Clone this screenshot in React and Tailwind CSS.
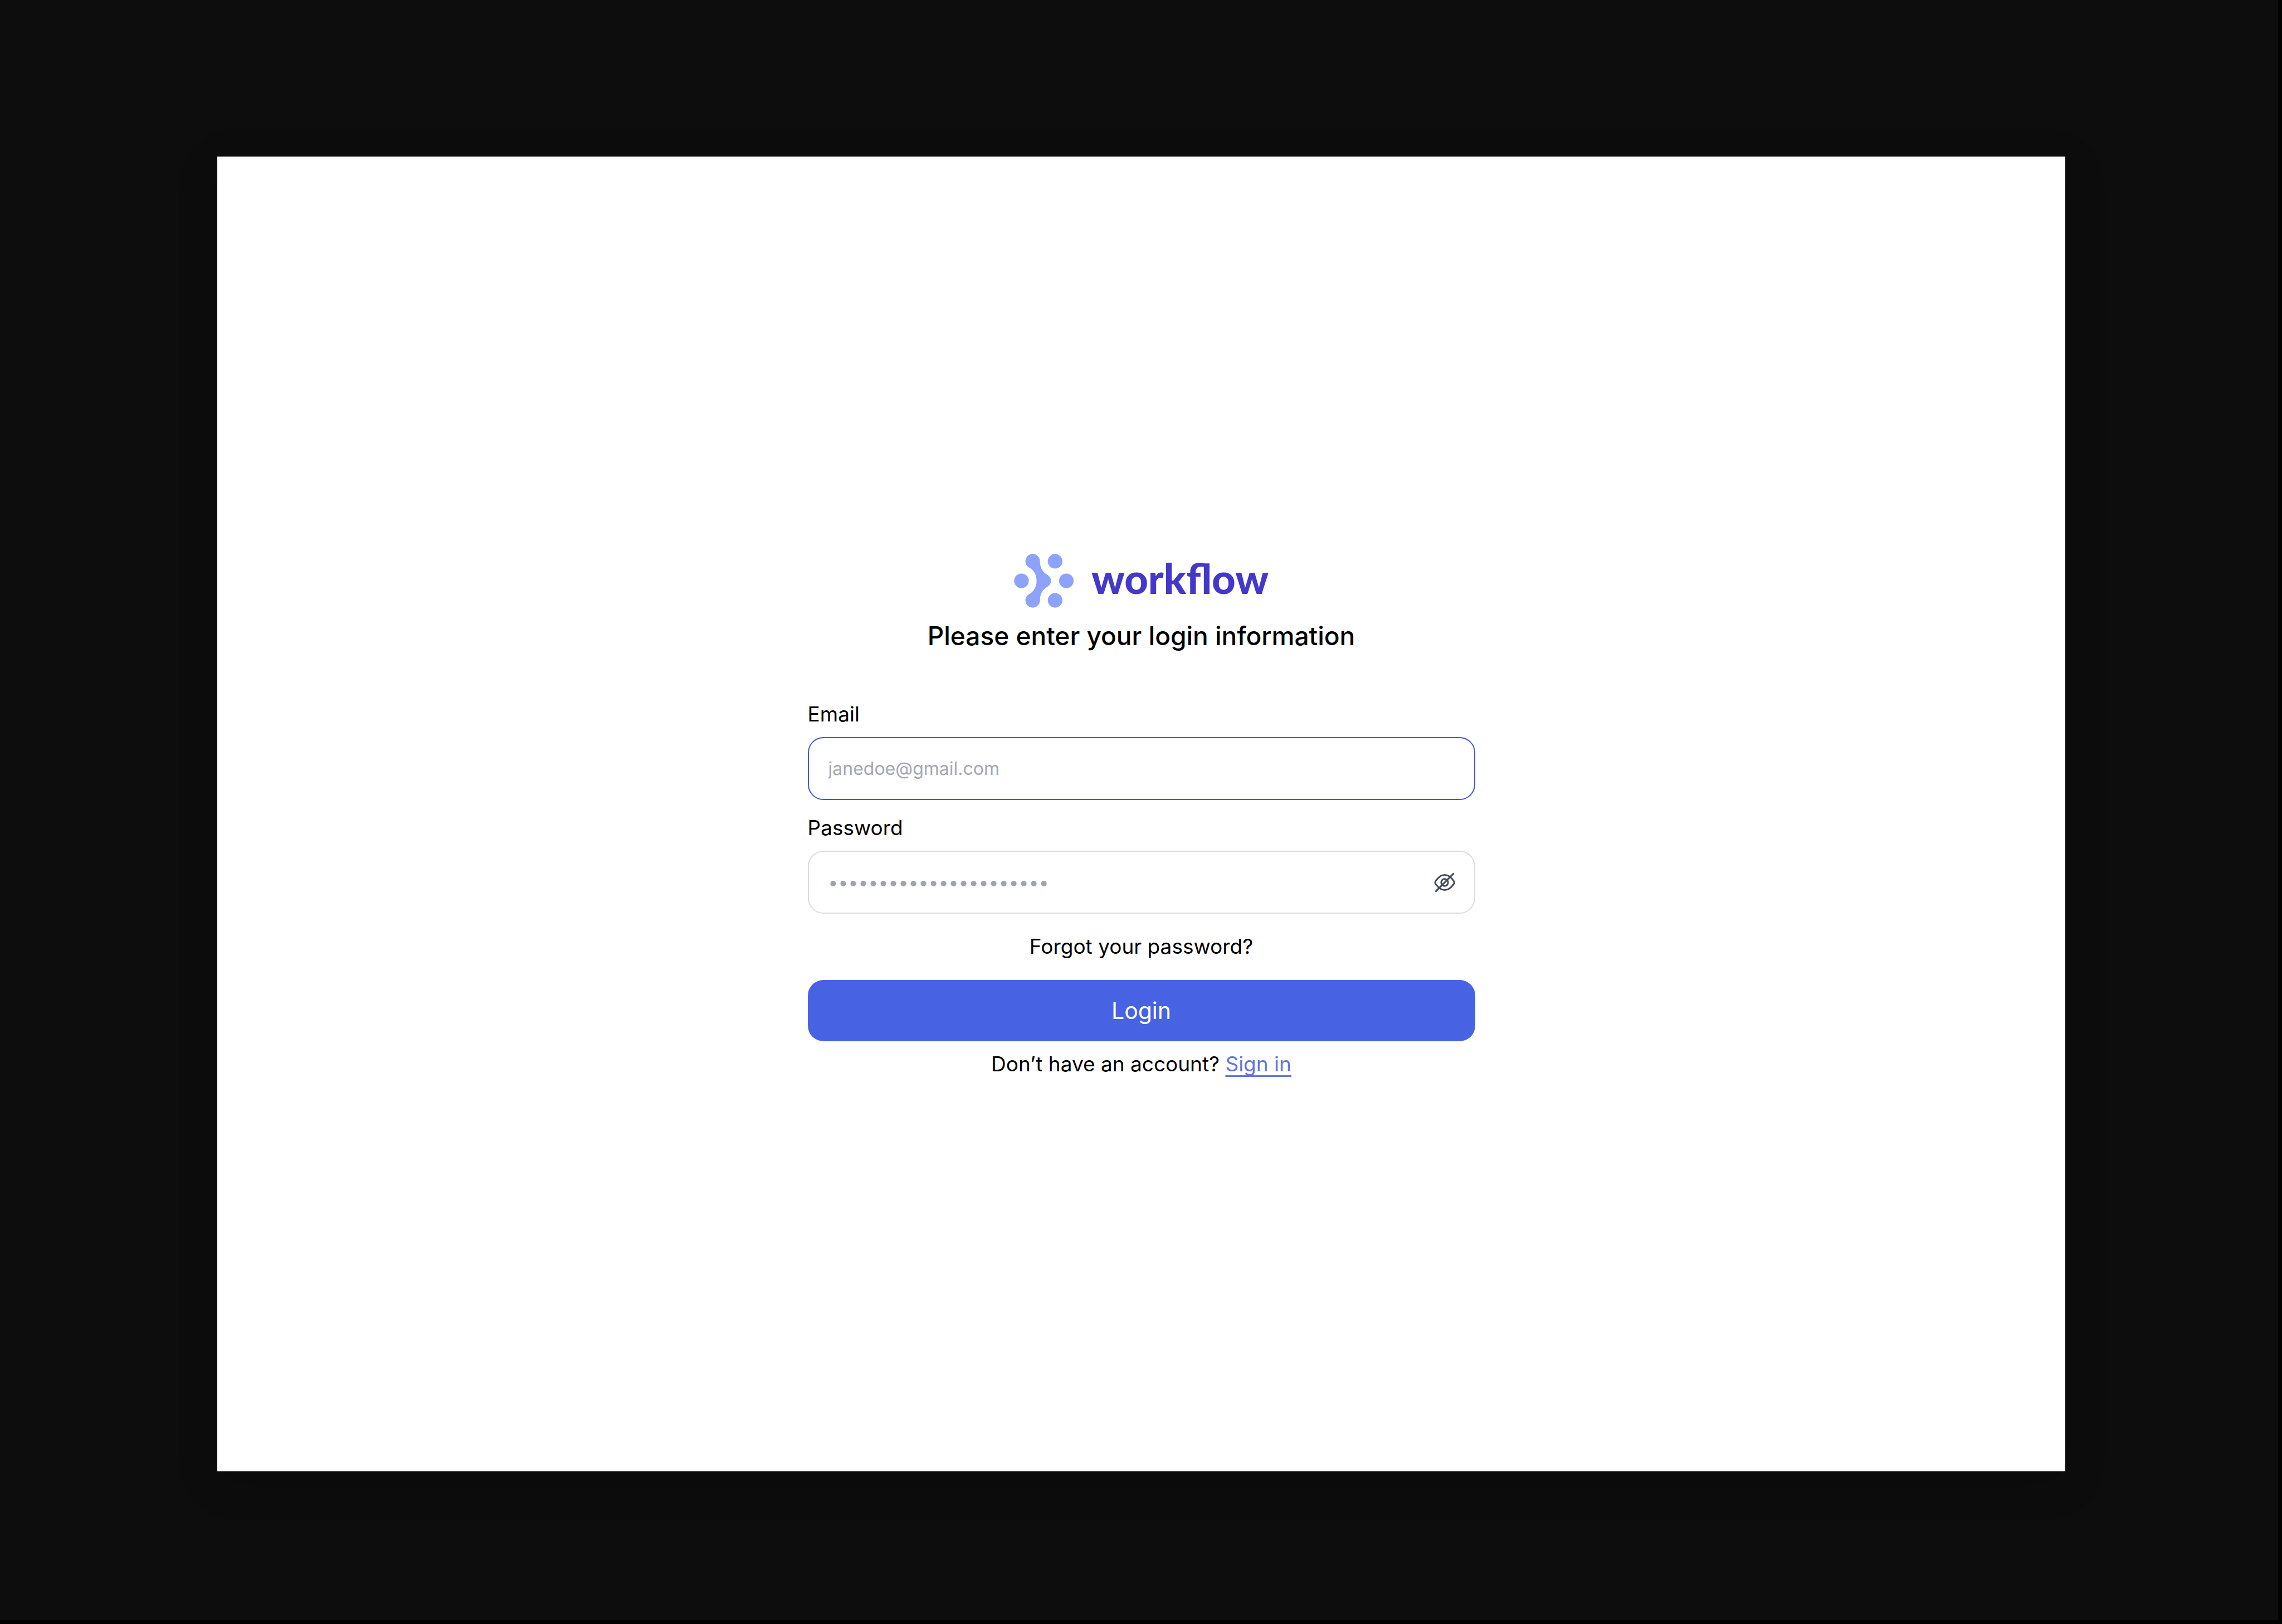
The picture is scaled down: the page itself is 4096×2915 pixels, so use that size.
function FlowMark() {
  return (
    <svg className="h-[97px] w-[107px] shrink-0" viewBox="0 0 107 97" fill="#8da2fb" aria-hidden="true">
      <circle cx="13.4" cy="48.5" r="13.1" />
      <circle cx="73.8" cy="13.4" r="13.1" />
      <circle cx="73.8" cy="83.6" r="13.1" />
      <circle cx="94" cy="48.5" r="13.1" />
      <path d="M20.5 13.4A13.1 13.1 0 0 1 46.7 13.4C46.7 23 50 32 59.5 37.4C64 40 66.4 44 66.4 48.5C66.4 53 64 57 59.5 59.6C50 65 46.7 74 46.7 83.6A13.1 13.1 0 0 1 20.5 83.6C20.5 77.6 24.5 73.6 29.5 71C37 66 40.6 57.5 40.6 48.5C40.6 39.5 37 31 29.5 26C24.5 23.4 20.5 19.4 20.5 13.4Z" />
    </svg>
  );
}

function EyeOff() {
  return (
    <svg
      className="size-10"
      viewBox="0 0 40 40"
      fill="none"
      stroke="#414857"
      strokeWidth="2.9"
      strokeLinecap="round"
      strokeLinejoin="round"
      aria-hidden="true"
    >
      <path d="M4.2 23.2C2.6 21.2 2.6 18.8 4.2 16.8C8.6 10.6 14 6.4 20 6.4C26 6.4 31.6 10.4 36.1 16.8C37.5 18.8 37.5 21.2 36.1 23.2C31.6 29.6 26 33.6 20 33.6C14 33.6 8.6 29.4 4.2 23.2Z" />
      <circle cx="20" cy="20" r="6.2" />
      <path d="M4.4 35.6L35.6 4.4" />
    </svg>
  );
}

export default function App() {
  return (
    <div className="flex min-h-screen bg-black pr-[7px] pb-[7px] font-['Inter',sans-serif] text-black">
      <div className="flex flex-1 bg-[#0d0d0d] pt-[281px] pr-[382px] pb-[267px] pl-[390px]">
        <main className="flex flex-1 flex-col items-center justify-center bg-white pt-1 shadow-[0_18px_68px_rgba(0,0,0,0.2)]">
          <div className="flex items-start gap-8">
            <FlowMark />
            <span className="font-['Lato',sans-serif] text-[74px] leading-[88px] font-black text-[#4338ca]">workflow</span>
          </div>
          <h1 className="mt-[22px] text-[46px] leading-[56px] font-medium">Please enter your login information</h1>

          <form className="mt-[91px] flex w-full max-w-[1198px] flex-col text-[37px] leading-[44px]">
            <label htmlFor="email">Email</label>
            <input
              id="email"
              type="email"
              placeholder="janedoe@gmail.com"
              className="mt-[19px] h-[113px] rounded-[28px] border-2 border-[#4558d0] px-[35px] text-[32px] outline-none placeholder:text-[#a3a7b0]"
            />

            <label htmlFor="password" className="mt-7">Password</label>
            <div className="mt-[19px] flex h-[113px] items-center rounded-[28px] border-2 border-[#dcdcdc] pr-[33px] pl-[35px]">
              <input
                id="password"
                type="password"
                placeholder="••••••••••••••••••••••"
                className="min-w-0 flex-1 text-[32px] outline-none placeholder:text-[#9fa3ae]"
              />
              <button type="button" aria-label="Show password">
                <EyeOff />
              </button>
            </div>

            <a href="#forgot" className="mt-[37px] self-center">Forgot your password?</a>
            <button type="submit" className="mt-[38px] h-[110px] rounded-[28px] bg-[#4763e4] text-[41px] text-white">
              Login
            </button>
            <p className="mt-[19px] text-center">
              Don’t have an account?{" "}
              <a
                href="#signin"
                className="text-[#6176dd] underline decoration-3 underline-offset-[7px] [text-decoration-skip-ink:none]"
              >
                Sign in
              </a>
            </p>
          </form>
        </main>
      </div>
    </div>
  );
}
